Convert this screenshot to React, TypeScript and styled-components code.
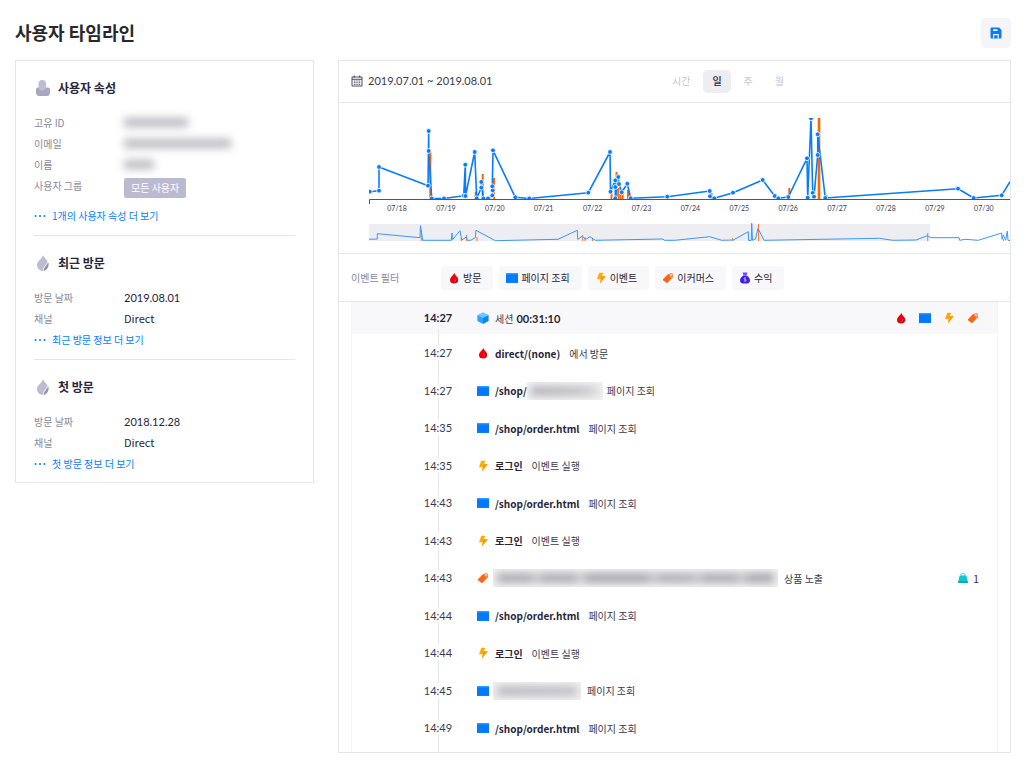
import React from 'react';
import styled, { createGlobalStyle, css } from 'styled-components';

const hangul = `'Noto Sans CJK KR', sans-serif`;
const numeric = `Lato, 'Noto Sans CJK KR', sans-serif`;

const color = {
  ink: '#26253b',
  text: '#3b3a50',
  label: '#8a899c',
  faint: '#c6c5d4',
  line: '#e6e6e8',
  soft: '#f8f8fb',
  chip: '#ededf2',
  blue: '#077cff',
  orange: '#ff6600',
};

const GlobalStyle = createGlobalStyle`
  *, *::before, *::after { box-sizing: border-box; }
  body {
    margin: 0;
    background: #fff;
    color: ${color.text};
    font: 10px/21px ${hangul};
  }
  button { font: inherit; color: inherit; border: 0; cursor: pointer; }
  h1, h2, dl, dd, ul { margin: 0; padding: 0; }
  ul { list-style: none; }
  svg { display: block; flex: none; }
`;

const Page = styled.main`
  padding: 18px 17px 16px 15px;
`;

const PageHeader = styled.header`
  display: flex;
  align-items: flex-start;
  justify-content: space-between;
  height: 30px;
  margin-bottom: 12px;
`;

const Title = styled.h1`
  font-size: 18px;
  line-height: 28px;
  font-weight: 700;
  color: #28282c;
`;

const SaveButton = styled.button`
  display: grid;
  place-items: center;
  width: 30px;
  height: 30px;
  padding: 0;
  border-radius: 5px;
  background: #f4f4f9;
`;

const Columns = styled.div`
  display: flex;
  align-items: flex-start;
  gap: 24px;
`;

const Card = styled.section`
  border: 1px solid ${color.line};
  background: #fff;
`;

const ProfileCard = styled(Card)`
  flex: 0 0 299px;
  padding: 0 18px;
`;

const TimelineCard = styled(Card)`
  flex: 1;
  min-width: 0;
`;

const Group = styled.section`
  padding: 15px 0 9px;
  & + & { border-top: 1px solid ${color.line}; }
  &:last-child { padding-bottom: 8px; }
`;

const GroupTitle = styled.h2`
  display: flex;
  align-items: center;
  gap: 6px;
  height: 24px;
  margin-bottom: 12px;
  font-size: 12px;
  line-height: 24px;
  font-weight: 700;
  color: ${color.ink};
`;

const Field = styled.div<{ $tall?: boolean }>`
  display: flex;
  height: ${p => (p.$tall ? 30 : 21)}px;
  dt { width: 90px; color: ${color.label}; }
`;

const Value = styled.dd<{ $numeric?: boolean }>`
  font-size: 11px;
  color: ${color.ink};
  ${p => p.$numeric && css`font-family: ${numeric};`}
`;

const Badge = styled.span`
  display: block;
  height: 20px;
  margin-top: 3px;
  padding: 0 7px;
  border-radius: 2px;
  background: #bcbad0;
  color: #fff;
  font-size: 10px;
  line-height: 20px;
`;

const MoreLink = styled.a`
  display: flex;
  align-items: center;
  gap: 6px;
  color: ${color.blue};
  text-decoration: none;
`;

const Hidden = styled.span<{ $w: number }>`
  display: block;
  width: ${p => p.$w}px;
  height: 9px;
  margin-top: 6px;
  background: #b9b9bf;
  filter: blur(4px);
`;

const Masked = styled.span<{ $w: number; $tone: string }>`
  display: flex;
  align-items: center;
  width: ${p => p.$w}px;
  height: 18px;
  padding: 0 4px;
  overflow: hidden;
  background: #f1f1f3;
  &::before {
    content: '';
    flex: 1;
    height: 8px;
    filter: blur(4px);
    background: ${p => p.$tone};
  }
`;

const MaskedName = styled(Masked)`
  margin-left: -2px;
`;

const Toolbar = styled.div`
  display: flex;
  align-items: center;
  height: 42px;
  padding: 0 12px;
  border-bottom: 1px solid ${color.line};
`;

const DateRange = styled.button`
  display: flex;
  align-items: center;
  gap: 5px;
  width: 312px;
  padding: 0 0 2px;
  background: none;
  text-align: left;
  font: 11px/21px ${numeric};
  color: ${color.text};
`;

const Units = styled.div`
  display: flex;
  gap: 4px;
`;

const UnitButton = styled.button<{ $active?: boolean }>`
  height: 23px;
  padding: 0 9px 2px;
  border-radius: 5px;
  background: ${p => (p.$active ? color.chip : 'none')};
  color: ${p => (p.$active ? color.ink : color.faint)};
  font-weight: ${p => (p.$active ? 500 : 400)};
`;

const ChartArea = styled.div`
  padding-left: 30px;
  border-bottom: 1px solid ${color.line};
  svg { width: 100%; height: auto; }
  text { font: 7px ${numeric}; fill: ${color.text}; text-anchor: middle; }
`;

const FilterBar = styled(Toolbar)`
  height: 48px;
`;

const FilterLabel = styled.span`
  width: 90px;
  color: ${color.label};
`;

const Filters = styled.div`
  display: flex;
  gap: 6px;
`;

const FilterButton = styled.button`
  display: flex;
  align-items: center;
  gap: 3px;
  height: 24px;
  padding: 0 12px 0 7px;
  border-radius: 3px;
  background: ${color.soft};
  color: ${color.ink};
`;

const Timeline = styled.div`
  margin: 0 12px;
  border: solid #f5f5f7;
  border-width: 0 1px;
`;

const row = css`
  display: grid;
  grid-template-columns: 60px 9px 1fr auto;
  align-items: center;
  padding: 0 18px 0 56px;
`;

const SessionRow = styled.div`
  ${row}
  height: 32px;
  background: ${color.soft};
`;

const EventRow = styled.li`
  ${row}
  height: 38px;
`;

const Events = styled.ul`
  padding-bottom: 5px;
  li:nth-child(even) { height: 37px; }
  li:last-child time { height: 43px; margin-bottom: -5px; }
`;

const Time = styled.time<{ $session?: boolean }>`
  display: flex;
  flex-direction: column;
  align-items: center;
  height: 100%;
  font: ${p => (p.$session ? 700 : 400)} 11px/15px ${numeric};
  color: ${p => (p.$session ? color.ink : color.text)};
  &::before, &::after {
    content: '';
    width: 1px;
    background: ${p => (p.$session ? 'transparent' : '#e6e6ed')};
  }
  &::before { height: ${p => (p.$session ? 8 : 11)}px; }
  &::after { flex: 1; }
  ${p => p.$session && css`
    &::after { margin-top: 5px; background: #e6e6ed; }
  `}
`;

const Detail = styled.div`
  grid-column: 3;
  display: flex;
  align-items: center;
  gap: 6px;
`;

const Name = styled.span<{ $tight?: boolean }>`
  display: flex;
  align-items: center;
  margin-right: ${p => (p.$tight ? -2 : 3)}px;
  font-weight: 700;
  color: ${color.ink};
`;

const Duration = styled.b`
  font: 700 11px/21px ${numeric};
  color: ${color.ink};
`;

const SessionTitle = styled.span`
  display: flex;
  align-items: center;
  gap: 3px;
`;

const SessionKinds = styled.div`
  display: flex;
  gap: 12px;
`;

const Count = styled.span`
  display: flex;
  align-items: center;
  gap: 4px;
  font-size: 11px;
`;

type Kind = 'visit' | 'page' | 'event' | 'commerce' | 'revenue' | 'session' | 'bag';

const shapes: Record<Kind, React.ReactNode> = {
  visit: (
    <>
      <path d="M6.3.8C6.6 3 10 4.800 10 8a4 3.600 0 0 1-8 0C2 5 5.500 3.800 6.300.8z" fill="#f0000d" />
      <path d="M9.200 5.200C10.600 8 9.600 11 6 11.300c-.9-2 1.300-2.600 3.200-6.100z" fill="#b8000c" />
      <path d="M8.200 7.200L6.600 10.400" stroke="#ff8080" strokeWidth=".6" />
    </>
  ),
  page: (
    <>
      <rect x="0" y="1" width="12" height="10" rx=".5" fill="#0677ff" />
      <path d="M0 1h12v1.400H0z" fill="#2aa0ff" />
      <path d="M0 10.400h12v.6H0z" fill="#0a8cff" />
    </>
  ),
  event: (
    <>
      <path d="M4.200.8h4L7 4.200h3.600L5 11.400l.8-4.200H2z" fill="#ffab0a" />
      <path d="M7 4.200h3.600L5 11.400l.8-4.200z" fill="#ff9900" />
    </>
  ),
  commerce: (
    <>
      <path d="M1 7.200L5.800 2.200 10.200 1.200l.8 3.800-5.500 5.700a.9.9 0 0 1-1.200 0L1 8.200z" fill="#ff6410" />
      <path d="M5.800 2.200L10.200 1.200l.8 3.800-1.500 1.500z" fill="#ff8a45" />
      <circle cx="9" cy="3.100" r=".8" fill="#fff" />
    </>
  ),
  revenue: (
    <>
      <path d="M3.600.6h4.800L7.600 3.200h-3.200z" fill="#6a4dff" />
      <path d="M4.400 3.600h3.200C9.600 4.800 11 6.600 11 8.600c0 1.900-1.200 2.800-3 2.800H4c-1.800 0-3-.9-3-2.800 0-2 1.400-3.800 3.400-5z" fill="#3d1fe8" />
      <path d="M7.200 6.200c-.7-.6-2.200-.4-2.200.5 0 1 2.200.6 2.200 1.600 0 .9-1.600 1.100-2.400.4M6 5.300v4.200" stroke="#c9beff" strokeWidth=".7" fill="none" />
    </>
  ),
  session: (
    <>
      <path d="M6 .2l5.600 2.700L6 5.700.4 2.900z" fill="#6cc6ff" />
      <path d="M.4 2.900L6 5.700v6.200L.4 9z" fill="#2ba2ff" />
      <path d="M11.600 2.900L6 5.700v6.200L11.600 9z" fill="#0a86fb" />
    </>
  ),
  bag: (
    <>
      <path d="M4 4.500V3.200a2 1.900 0 0 1 4 0v1.300" stroke="#6be6e0" strokeWidth="1.200" fill="none" />
      <path d="M2.600 3.600h6.800l1.600 7.400H1z" fill="#0cc9cf" />
      <path d="M1.400 9l-.4 2h10l-.4-2z" fill="#08a9bf" />
    </>
  ),
};

const KindIcon = ({ kind }: { kind: Kind }) => (
  <svg width="12" height="12" viewBox="0 0 12 12" aria-hidden="true">{shapes[kind]}</svg>
);

const UserIcon = () => (
  <svg width="18" height="18" viewBox="0 0 18 18" aria-hidden="true">
    <path d="M2 10.500Q2 8.500 4 8.500h10q2 0 2 2v3.500Q15.500 17 13 17h-8Q2.500 17 2 14z" fill="#a9a7c0" />
    <rect x="4.500" y="1" width="7.500" height="10.500" rx="3.700" fill="#bfbdd4" />
  </svg>
);

const DropIcon = () => (
  <svg width="18" height="18" viewBox="0 0 18 18" aria-hidden="true">
    <path d="M9 1c.8 3.500 5.500 5 5.500 9.500C14.500 14 12 17 9 17s-6-2.500-6-6.300C3 7 8 5.500 9 1z" fill="#bdbbd1" />
    <path d="M14.300 8.500c.8 3.500-.8 7.500-5 8.500-.8-3.200 3.800-4.500 5-8.500z" fill="#9492ab" />
    <path d="M13.600 7.500c-.4 3-4.600 5.500-4.500 9.500" stroke="#fff" strokeWidth=".8" fill="none" />
  </svg>
);

const Dots = () => (
  <svg width="12" height="12" viewBox="0 0 12 12" fill={color.blue} aria-hidden="true">
    <circle cx="1.500" cy="6" r="1" /><circle cx="6" cy="6" r="1" /><circle cx="10.500" cy="6" r="1" />
  </svg>
);

const SaveIcon = () => (
  <svg width="12" height="12" viewBox="0 0 12 12" aria-hidden="true">
    <path d="M2 .5h7L11.500 3v7.500a1 1 0 0 1-1 1h-9a1 1 0 0 1-1-1v-9a1 1 0 0 1 1-1z" fill={color.blue} />
    <path d="M3 2.200h4.500v1.800H3zM3 11.500V7h5.800v4.500H7.600V8.300H4.200v3.200z" fill="#f4f4f9" />
  </svg>
);

const CalendarIcon = () => (
  <svg width="12" height="12" viewBox="0 0 12 12" fill="none" stroke={color.text} aria-hidden="true">
    <path d="M1 2h10v9H1zM1 4.300h10" strokeWidth=".9" />
    <path d="M3.300.5v2M8.700.5v2" />
    <path d="M2.800 6h6.600M2.800 7.700h6.600M2.800 9.400h6.600" strokeWidth="1" strokeDasharray="1 .8" />
  </svg>
);

type Point = [number, number];

const visits: Point[] = [
  [369.7, 191.7], [379, 190.7], [379, 167], [428, 185.7], [428.7, 131], [428.7, 151], [431.7, 198.5], [444, 198.5],
  [463.7, 195.7], [465.3, 164.7], [465.5, 196], [474.7, 152], [476.7, 198.3], [481.3, 187.7], [481.3, 182],
  [483.3, 198.5], [488, 198.5], [492.3, 195.3], [492.7, 190.3], [492.3, 186.3], [493, 150.3], [515.3, 197.3],
  [529.3, 198.5], [588.3, 192.7], [610, 152], [610.5, 191.7], [615.3, 180.3], [615.3, 187], [615.3, 198.3],
  [618.3, 177], [619, 184], [621.7, 192.3], [627.3, 183.7], [630.7, 198.3], [667.3, 196.7], [709.7, 191],
  [710, 196.3], [714.3, 198.3], [733, 192.7], [762.7, 180], [774.7, 196], [778.3, 198.3], [788.3, 197],
  [807, 158.3], [807.7, 197.7], [811, 118.3], [812.7, 193], [814, 196.7], [817.7, 155], [817.7, 134.3],
  [825.3, 198], [958, 188.7], [973.7, 198], [1001.7, 195.3], [1010, 181.7],
];

const purchases: Point[] = [
  [430.3, 152], [475.7, 192], [482.7, 174], [494, 178], [611.5, 193], [616.5, 172], [618.5, 188], [620.5, 192],
  [622.7, 189], [628, 190], [711.5, 193], [789.3, 188], [818.7, 118], [819.3, 118], [826.5, 195],
];

const overview: Point[] = [
  [369, 239.3], [377.3, 239], [377.3, 233.7], [420, 237.7], [420.5, 225.7], [422.7, 240.3], [451.3, 240.3],
  [452, 233], [452.5, 239.7], [460, 230.7], [461.7, 240], [466.3, 237], [467.3, 240.3], [470.7, 240.3],
  [475.3, 237.7], [476, 230.3], [495.3, 240.7], [558, 239.3], [577.3, 230.3], [577.7, 239.3], [582, 236.3],
  [584, 238.3], [586.3, 239], [590, 236.7], [595.3, 240.3], [663, 239], [664.7, 240.3], [674.7, 240.3],
  [709.7, 236.7], [721.7, 240.3], [733.3, 240], [748.3, 231.7], [748.7, 240.7], [751.3, 240.3], [751.7, 223.3],
  [752.5, 240.3], [755.5, 239], [758, 228.3], [764, 240.3], [879.3, 238.3], [892.7, 240.3], [916, 240],
  [927.3, 235.7], [930.7, 237.7], [959, 237.7], [959.7, 240.3], [965, 239.3], [978.3, 240.3], [1001.7, 233],
  [1002, 239.3], [1003.3, 235], [1005.7, 240.3], [1007.3, 231], [1008, 240.3], [1010, 240.5],
];

const overviewPurchases: Point[] = [
  [421.3, 230], [461.3, 238], [466.7, 235], [477, 237], [582.7, 235], [585, 237], [592.5, 238], [732.7, 238],
  [758.5, 224], [927.7, 233], [1003.5, 239],
];

const days = Array.from({ length: 13 }, (_, i) => `07/${18 + i}`);
const toLine = (points: Point[]) => points.map(p => p.join(',')).join(' ');

const Chart = () => (
  <ChartArea>
    <svg viewBox="369 103 641 150" role="img" aria-label="사용자 타임라인">
      <clipPath id="plot"><path d="M369 118h641v82H369z" /></clipPath>
      <g clipPath="url(#plot)">
        {purchases.map(([x, y]) => (
          <path key={x} d={`M${x} ${y}V199`} stroke={color.orange} strokeWidth="2" />
        ))}
        <polyline points={toLine(visits)} fill="none" stroke={color.blue} strokeWidth="1.600" strokeLinejoin="round" />
        {visits.slice(0, -1).map(([x, y]) => (
          <circle key={`${x}-${y}`} cx={x} cy={y} r="2.400" fill={color.blue} stroke="#fff" strokeWidth=".8" />
        ))}
      </g>
      <path d="M369.500 204v-4.500H1010" fill="none" stroke="#55546a" />
      {days.map((day, i) => (
        <text key={day} x={397 + i * 48.9} y="211">{day}</text>
      ))}
      <rect x="369" y="224" width="561" height="17" fill={color.chip} />
      {overviewPurchases.map(([x, y]) => (
        <path key={x} d={`M${x} ${y}V241`} stroke="#ff7a2b" />
      ))}
      <polyline points={toLine(overview)} fill="none" stroke="#3b97fb" />
    </svg>
  </ChartArea>
);

const filters: [Kind, string][] = [
  ['visit', '방문'], ['page', '페이지 조회'], ['event', '이벤트'], ['commerce', '이커머스'], ['revenue', '수익'],
];

const pathMask = 'linear-gradient(90deg, #a5a5ac, #b5b5bb 70%, #d5d5da)';
const nameMask = 'linear-gradient(90deg, #aeaeb5, #b4b4bb)';
const productMask =
  'linear-gradient(90deg, #9d9da4 0 12%, #c8c8cd 14%, #9d9da4 17% 28%, #d2d2d7 30%, #97979f 33% 54%, #c2c2c8 56%, #a2a2aa 59% 70%, #c2c2c8 72%, #9d9da4 75% 86%, #c8c8cd 88%, #97979f 91%)';

type EventItem = { time: string; kind: Kind; name: React.ReactNode; text: string; count?: number };

const page = (time: string): EventItem => ({ time, kind: 'page', name: <Name>/shop/order.html</Name>, text: '페이지 조회' });
const login = (time: string): EventItem => ({ time, kind: 'event', name: <Name>로그인</Name>, text: '이벤트 실행' });

const events: EventItem[] = [
  { time: '14:27', kind: 'visit', name: <Name>direct/(none)</Name>, text: '에서 방문' },
  { time: '14:27', kind: 'page', name: <Name $tight>/shop/<Masked $w={76} $tone={pathMask} /></Name>, text: '페이지 조회' },
  page('14:35'),
  login('14:35'),
  page('14:43'),
  login('14:43'),
  { time: '14:43', kind: 'commerce', name: <MaskedName $w={285} $tone={productMask} />, text: '상품 노출', count: 1 },
  page('14:44'),
  login('14:44'),
  { time: '14:45', kind: 'page', name: <MaskedName $w={88} $tone={nameMask} />, text: '페이지 조회' },
  page('14:49'),
];

const VisitGroup = ({ title, date, more }: { title: string; date: string; more: string }) => (
  <Group>
    <GroupTitle><DropIcon />{title}</GroupTitle>
    <dl>
      <Field><dt>방문 날짜</dt><Value $numeric>{date}</Value></Field>
      <Field><dt>채널</dt><Value>Direct</Value></Field>
    </dl>
    <MoreLink href="#more"><Dots />{more}</MoreLink>
  </Group>
);

export default function App() {
  return (
    <Page>
      <GlobalStyle />
      <PageHeader>
        <Title>사용자 타임라인</Title>
        <SaveButton type="button" aria-label="저장"><SaveIcon /></SaveButton>
      </PageHeader>
      <Columns>
        <ProfileCard>
          <Group>
            <GroupTitle><UserIcon />사용자 속성</GroupTitle>
            <dl>
              <Field><dt>고유 ID</dt><Value><Hidden $w={64} /></Value></Field>
              <Field><dt>이메일</dt><Value><Hidden $w={107} /></Value></Field>
              <Field><dt>이름</dt><Value><Hidden $w={30} /></Value></Field>
              <Field $tall><dt>사용자 그룹</dt><Value><Badge>모든 사용자</Badge></Value></Field>
            </dl>
            <MoreLink href="#more"><Dots />1개의 사용자 속성 더 보기</MoreLink>
          </Group>
          <VisitGroup title="최근 방문" date="2019.08.01" more="최근 방문 정보 더 보기" />
          <VisitGroup title="첫 방문" date="2018.12.28" more="첫 방문 정보 더 보기" />
        </ProfileCard>
        <TimelineCard>
          <Toolbar>
            <DateRange type="button"><CalendarIcon />2019.07.01 ~ 2019.08.01</DateRange>
            <Units>
              {['시간', '일', '주', '월'].map(unit => (
                <UnitButton key={unit} type="button" $active={unit === '일'}>{unit}</UnitButton>
              ))}
            </Units>
          </Toolbar>
          <Chart />
          <FilterBar>
            <FilterLabel>이벤트 필터</FilterLabel>
            <Filters>
              {filters.map(([kind, label]) => (
                <FilterButton key={kind} type="button"><KindIcon kind={kind} />{label}</FilterButton>
              ))}
            </Filters>
          </FilterBar>
          <Timeline>
            <SessionRow>
              <Time $session>14:27</Time>
              <Detail>
                <KindIcon kind="session" />
                <SessionTitle>세션 <Duration>00:31:10</Duration></SessionTitle>
              </Detail>
              <SessionKinds>
                {filters.slice(0, 4).map(([kind]) => <KindIcon key={kind} kind={kind} />)}
              </SessionKinds>
            </SessionRow>
            <Events>
              {events.map((event, i) => (
                <EventRow key={i}>
                  <Time>{event.time}</Time>
                  <Detail>
                    <KindIcon kind={event.kind} />
                    {event.name}
                    <span>{event.text}</span>
                  </Detail>
                  {event.count && <Count><KindIcon kind="bag" />{event.count}</Count>}
                </EventRow>
              ))}
            </Events>
          </Timeline>
        </TimelineCard>
      </Columns>
    </Page>
  );
}
